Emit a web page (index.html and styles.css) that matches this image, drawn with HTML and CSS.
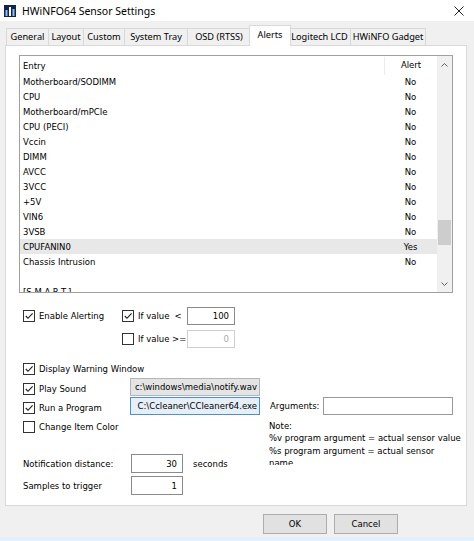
FILE: index.html
```html
<!DOCTYPE html>
<html>
<head>
<meta charset="utf-8">
<title>HWiNFO64 Sensor Settings</title>
<link rel="stylesheet" href="styles.css">
</head>
<body>
<div class="window">
  <div class="titlebar">
    <svg class="app-icon" viewBox="0 0 12 12" width="12" height="12">
      <rect x="0" y="0" width="12" height="12" fill="#13254a"/>
      <rect x="1.5" y="5" width="2" height="6" fill="#8fc1f0"/>
      <rect x="5" y="2" width="2" height="9" fill="#ffffff"/>
      <rect x="8.5" y="4" width="2" height="7" fill="#8fc1f0"/>
    </svg>
    <span class="title">HWiNFO64 Sensor Settings</span>
    <svg class="close" viewBox="0 0 10 10" width="10" height="10">
      <path d="M0.5 0.5 L9.5 9.5 M9.5 0.5 L0.5 9.5" stroke="#222" stroke-width="1" fill="none"/>
    </svg>
  </div>

  <div class="tabs">
    <div class="tab t-general">General</div>
    <div class="tab t-layout">Layout</div>
    <div class="tab t-custom">Custom</div>
    <div class="tab t-tray">System Tray</div>
    <div class="tab t-osd">OSD (RTSS)</div>
    <div class="tab t-alerts active">Alerts</div>
    <div class="tab t-lcd">Logitech LCD</div>
    <div class="tab t-gadget">HWiNFO Gadget</div>
  </div>

  <div class="panel">
    <div class="listbox">
      <div class="list">
        <div class="row head"><span class="c1">Entry</span><span class="c2">Alert</span></div>
        <div class="row"><span class="c1">Motherboard/SODIMM</span><span class="c2">No</span></div>
        <div class="row"><span class="c1">CPU</span><span class="c2">No</span></div>
        <div class="row"><span class="c1">Motherboard/mPCIe</span><span class="c2">No</span></div>
        <div class="row"><span class="c1">CPU (PECI)</span><span class="c2">No</span></div>
        <div class="row"><span class="c1">Vccin</span><span class="c2">No</span></div>
        <div class="row"><span class="c1">DIMM</span><span class="c2">No</span></div>
        <div class="row"><span class="c1">AVCC</span><span class="c2">No</span></div>
        <div class="row"><span class="c1">3VCC</span><span class="c2">No</span></div>
        <div class="row"><span class="c1">+5V</span><span class="c2">No</span></div>
        <div class="row"><span class="c1">VIN6</span><span class="c2">No</span></div>
        <div class="row"><span class="c1">3VSB</span><span class="c2">No</span></div>
        <div class="row selected"><span class="c1">CPUFANIN0</span><span class="c2">Yes</span></div>
        <div class="row"><span class="c1">Chassis Intrusion</span><span class="c2">No</span></div>
        <div class="row"><span class="c1"></span><span class="c2"></span></div>
        <div class="row"><span class="c1">[S.M.A.R.T.]</span><span class="c2">-</span></div>
      </div>
      <div class="scrollbar">
        <div class="sb-btn">
          <svg viewBox="0 0 7 4" width="7" height="4"><path d="M0.5 3.5 L3.5 0.5 L6.5 3.5" stroke="#606060" fill="none" stroke-width="1"/></svg>
        </div>
        <div class="sb-track"><div class="sb-thumb"></div></div>
        <div class="sb-btn">
          <svg viewBox="0 0 7 4" width="7" height="4"><path d="M0.5 0.5 L3.5 3.5 L6.5 0.5" stroke="#606060" fill="none" stroke-width="1"/></svg>
        </div>
      </div>
    </div>

    <div class="controls">
      <div class="line line-a">
        <label class="check w-left"><span class="box on"><svg viewBox="0 0 10 10" width="10" height="10"><path d="M1.8 5 L4 7.3 L8.6 2.4" stroke="#1a1a1a" stroke-width="1.1" fill="none"/></svg></span><span>Enable Alerting</span></label>
        <label class="check cond"><span class="box on"><svg viewBox="0 0 10 10" width="10" height="10"><path d="M1.8 5 L4 7.3 L8.6 2.4" stroke="#1a1a1a" stroke-width="1.1" fill="none"/></svg></span><span class="cond-text">If value</span><span>&lt;</span></label>
        <div class="field value">100</div>
      </div>
      <div class="line line-b">
        <label class="check cond"><span class="box"></span><span class="cond-text">If value &gt;=</span></label>
        <div class="field value disabled">0</div>
      </div>
      <div class="line line-c">
        <label class="check"><span class="box on"><svg viewBox="0 0 10 10" width="10" height="10"><path d="M1.8 5 L4 7.3 L8.6 2.4" stroke="#1a1a1a" stroke-width="1.1" fill="none"/></svg></span><span>Display Warning Window</span></label>
      </div>
      <div class="line line-d">
        <label class="check w-prog low"><span class="box on"><svg viewBox="0 0 10 10" width="10" height="10"><path d="M1.8 5 L4 7.3 L8.6 2.4" stroke="#1a1a1a" stroke-width="1.1" fill="none"/></svg></span><span>Play Sound</span></label>
        <div class="field path readonly">c:\windows\media\notify.wav</div>
      </div>
      <div class="line line-e">
        <label class="check w-prog low"><span class="box on"><svg viewBox="0 0 10 10" width="10" height="10"><path d="M1.8 5 L4 7.3 L8.6 2.4" stroke="#1a1a1a" stroke-width="1.1" fill="none"/></svg></span><span>Run a Program</span></label>
        <div class="field path focused">C:\Ccleaner\CCleaner64.exe</div>
        <span class="args-label">Arguments:</span>
        <div class="field args"></div>
      </div>
      <div class="lower">
        <div class="lower-left">
          <label class="check line-f"><span class="box"></span><span>Change Item Color</span></label>
          <div class="num-line first">
            <span class="num-label">Notification distance:</span>
            <div class="field num">30</div>
            <span class="unit">seconds</span>
          </div>
          <div class="num-line">
            <span class="num-label">Samples to trigger</span>
            <div class="field num">1</div>
          </div>
        </div>
        <div class="note">Note:<br>%v program argument = actual sensor value<br>%s program argument = actual sensor<br>name</div>
      </div>
    </div>
  </div>

  <div class="buttons">
    <div class="btn">OK</div>
    <div class="btn">Cancel</div>
  </div>
  <div class="frame-bottom"></div>
</div>
</body>
</html>
```

FILE: styles.css
```css
* { box-sizing: border-box; }
html, body { margin: 0; padding: 0; }
body {
  width: 474px;
  height: 541px;
  overflow: hidden;
  background: #f0f0f0;
  font-family: "DejaVu Sans", sans-serif;
  font-size: 8.5px;
  color: #000;
}
.window {
  width: 474px;
  height: 541px;
  display: flex;
  flex-direction: column;
  background: #f0f0f0;
}

/* title bar */
.titlebar {
  height: 21px;
  flex: none;
  background: #fff;
  display: flex;
  align-items: center;
  padding: 0 10px 0 4px;
}
.app-icon { flex: none; margin-right: 6px; }
.title {
  flex: 1;
  font-family: "Noto Sans", sans-serif;
  font-size: 10.5px;
  color: #000;
}
.close { flex: none; }

/* tabs */
.tabs {
  flex: none;
  height: 24px;
  display: flex;
  align-items: flex-start;
  padding: 7px 0 0 6px;
  position: relative;
  z-index: 2;
}
.tab {
  height: 17px;
  border: 1px solid #d9d9d9;
  border-bottom: none;
  background: #f0f0f0;
  margin-left: -1px;
  font-family: "Noto Sans", sans-serif;
  font-size: 9.2px;
  line-height: 15px;
  text-align: center;
  color: #000;
}
.tab:first-child { margin-left: 0; }
.t-general { width: 43px; }
.t-layout { width: 36px; }
.t-custom { width: 42px; }
.t-tray { width: 64px; }
.t-osd { width: 64px; }
.t-alerts { width: 39px; }
.t-lcd { width: 63px; }
.t-gadget { width: 76px; }
.tab.active {
  background: #fff;
  height: 21px;
  margin-top: -3px;
  margin-right: -2px;
  margin-left: -2px;
  padding-top: 1px;
  position: relative;
  width: 42px;
}

/* panel */
.panel {
  flex: none;
  margin-left: 5px;
  width: 462px;
  height: 461px;
  background: #fff;
  border: 1px solid #d9d9d9;
  padding: 9px 0 0 13px;
  position: relative;
  z-index: 1;
}

/* list box */
.listbox {
  width: 434px;
  height: 238px;
  border: 1px solid #a0a0a0;
  display: flex;
  background: #fff;
}
.list {
  flex: 1;
  overflow: hidden;
}
.row {
  height: 15px;
  display: flex;
  align-items: center;
}
.row.head { height: 18px; padding-top: 1px; }
.row.selected { background: #e8e8e8; }
.c1 { flex: 1; padding-left: 3px; white-space: nowrap; }
.c2 { width: 53px; text-align: center; }
.row.head .c2 { border-left: 1px solid #ececec; height: 18px; line-height: 17px; }
.scrollbar {
  width: 15px;
  background: #f0f0f0;
  display: flex;
  flex-direction: column;
}
.sb-btn {
  height: 17px;
  display: flex;
  align-items: center;
  justify-content: center;
  flex: none;
}
.sb-track { flex: 1; padding: 147px 1px 0 1px; }
.sb-thumb { height: 25px; background: #cdcdcd; }

/* controls */
.controls { padding-left: 4px; }
.line { display: flex; align-items: center; }
.check { display: flex; align-items: center; white-space: nowrap; }
.box {
  width: 12px;
  height: 12px;
  flex: none;
  border: 1px solid #333;
  background: #fff;
  margin-right: 4px;
  display: flex;
  align-items: center;
  justify-content: center;
}
.w-left { width: 99px; }
.cond { width: 65px; }
.cond-text { margin-right: 5px; }
.line-a { margin-top: 14px; height: 18px; }
.line-b { margin-top: 5px; height: 18px; padding-left: 99px; }
.line-c { margin-top: 13px; height: 16px; }
.line-d { margin-top: 1px; height: 18px; }
.line-e { margin-top: 1px; height: 18px; }
.w-prog { width: 107px; }
.low { padding-top: 3px; }

.field {
  border: 1px solid #8a8a8a;
  background: #fff;
  height: 18px;
  display: flex;
  align-items: center;
  white-space: nowrap;
  overflow: hidden;
}
.value { width: 48px; justify-content: flex-end; padding-right: 5px; }
.value.disabled { border-color: #cfcfcf; color: #a8a8a8; }
.path { width: 130px; justify-content: flex-end; padding: 0 2px; }
.readonly { background: #e4e4e4; border-color: #b4b4b4; }
.focused { background: #e6eef7; border-color: #4d8fd1; }
.args-label { margin-left: 10px; width: 53px; }
.args { width: 130px; border-color: #9a9a9a; }

.lower { display: flex; margin-top: 4px; }
.lower-left { width: 246px; }
.line-f { height: 16px; }
.num-line { display: flex; align-items: center; margin-top: 3px; }
.num-line.first { margin-top: 19px; }
.num-label { width: 108px; }
.num { width: 52px; height: 19px; justify-content: flex-end; padding-right: 5px; }
.unit { margin-left: 10px; }
.note {
  width: 196px;
  height: 46px;
  overflow: hidden;
  line-height: 12.3px;
  padding-top: 1px;
}

/* buttons */
.buttons {
  flex: none;
  display: flex;
  justify-content: flex-end;
  gap: 7px;
  padding: 8px 76px 3px 0;
}
.btn {
  width: 64px;
  height: 20px;
  border: 1px solid #adadad;
  background: #e1e1e1;
  display: flex;
  align-items: center;
  justify-content: center;
}
.frame-bottom { flex: none; height: 4px; background: #e3f0fb; }
```
